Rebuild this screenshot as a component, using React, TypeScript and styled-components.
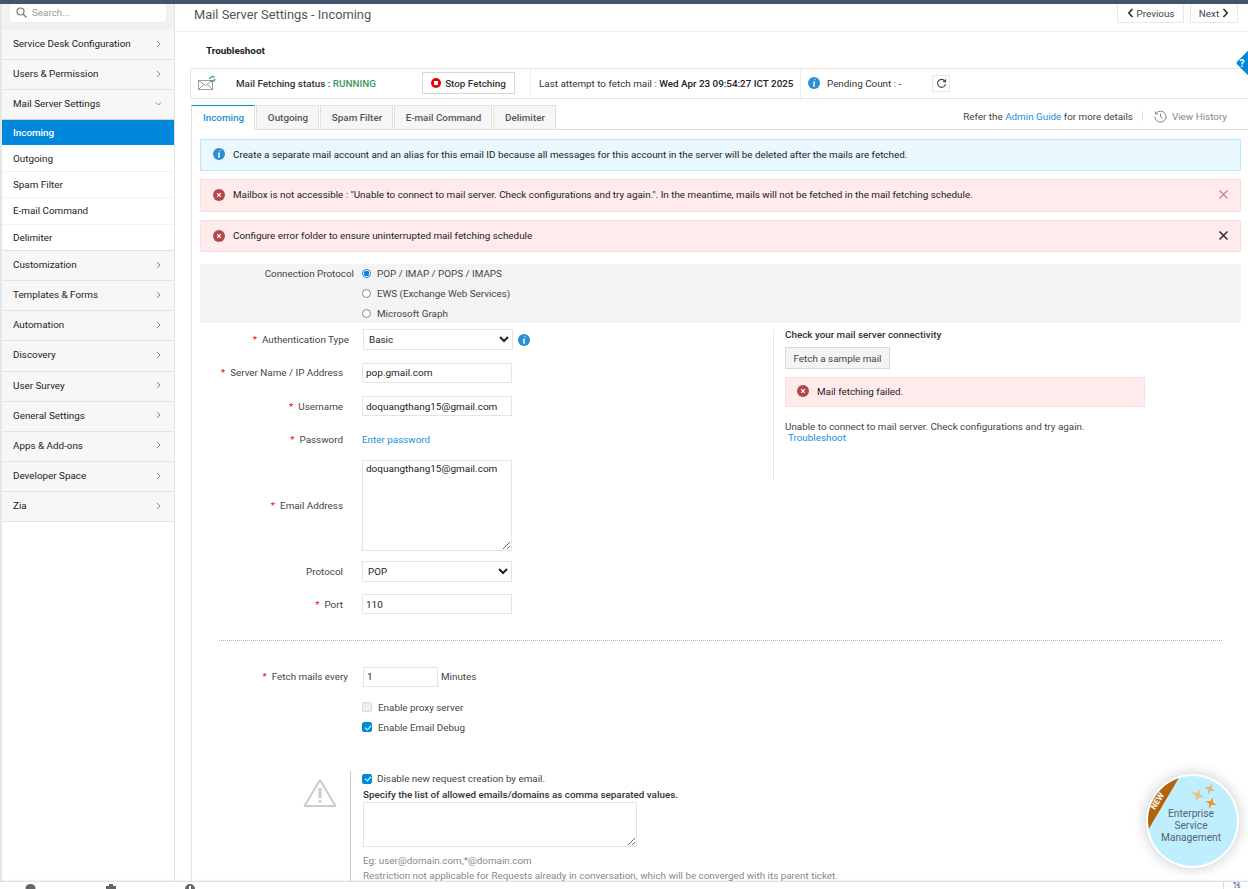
import React from "react";
import styled, { createGlobalStyle } from "styled-components";

const GlobalStyle = createGlobalStyle`
  html, body {
    margin: 0;
    padding: 0;
    height: 889px;
    overflow: hidden;
    background: #fff;
    font-family: Roboto, "Liberation Sans", sans-serif;
    font-size: 9.85px;
    color: #333;
  }
  * { box-sizing: border-box; }
`;

const Page = styled.div`
  position: relative;
  width: 1248px;
  height: 889px;
  overflow: hidden;
  display: flex;
  flex-direction: column;
`;

const TopStrip = styled.div`
  height: 4px;
  flex: none;
  background: #44546a;
`;

const Body = styled.div`
  flex: 1;
  min-height: 0;
  display: flex;
`;

const Sidebar = styled.aside`
  width: 175px;
  flex: none;
  border-left: 2px solid #e6e6e6;
  border-right: 1px solid #e3e3e3;
  background: #fff;
`;

const SearchArea = styled.div`
  height: 26px;
  padding: 0 7px;
  background: #f1f1f1;
`;

const SearchBox = styled.div`
  height: 19px;
  background: #fff;
  border: 1px solid #ececec;
  border-top: 0;
  border-radius: 0 0 3px 3px;
  display: flex;
  align-items: center;
  gap: 5px;
  padding: 0 0 2px 6px;
  color: #999;
`;

const NavHeader = styled.div<{ $strong?: boolean }>`
  height: 30.15px;
  display: flex;
  align-items: center;
  justify-content: space-between;
  padding: 0 12px 2px 11px;
  background: #f7f7f7;
  border-bottom: 1px solid ${(p) => (p.$strong ? "#cfcfcf" : "#e4e4e4")};
  color: #222;
`;

const NavItem = styled.div<{ $active?: boolean; $last?: boolean }>`
  height: ${(p) => (p.$active ? 25 : 26.4)}px;
  display: flex;
  align-items: center;
  padding-left: 11px;
  background: ${(p) => (p.$active ? "#0089dc" : "#fff")};
  color: ${(p) => (p.$active ? "#fff" : "#222")};
  font-weight: ${(p) => (p.$active ? 500 : 400)};
  border-bottom: ${(p) => (p.$active ? "0" : `1px solid ${p.$last ? "#e4e4e4" : "#f2f2f2"}`)};
`;

const Main = styled.main`
  flex: 1;
  min-width: 0;
  display: flex;
  flex-direction: column;
`;

const TitleBar = styled.div`
  height: 28px;
  flex: none;
  display: flex;
  justify-content: space-between;
  padding: 0 10px 0 19px;
  border-bottom: 1px solid #efefef;
`;

const PageTitle = styled.h1`
  margin: 0;
  font-size: 12.85px;
  font-weight: 400;
  line-height: 22px;
  color: #555;
`;

const Pager = styled.div`
  display: flex;
  gap: 6px;
  height: 19px;
`;

const PagerButton = styled.button<{ $width: number }>`
  width: ${(p) => p.$width}px;
  height: 19px;
  padding: 0;
  display: flex;
  align-items: center;
  justify-content: center;
  gap: 3px;
  background: #fff;
  border: 1px solid #e8e8e8;
  border-top: 0;
  font: inherit;
  color: #444;
`;

const SubHeading = styled.div`
  height: 36px;
  flex: none;
  padding-left: 31px;
  display: flex;
  align-items: center;
  font-weight: 700;
  color: #222;
`;

const StatusBar = styled.div`
  height: 31px;
  flex: none;
  margin-left: 15px;
  display: flex;
  align-items: center;
  border: 1px solid #e4e4e4;
  border-right: 0;
`;

const StatusCell = styled.div<{ $width: number; $pad?: number; $sep?: boolean }>`
  width: ${(p) => p.$width}px;
  flex: none;
  height: 100%;
  display: flex;
  align-items: center;
  white-space: nowrap;
  padding: 0 0 1px ${(p) => p.$pad ?? 0}px;
  border-right: ${(p) => (p.$sep ? "1px solid #ececec" : "0")};
`;

const StatusLabel = styled.span`
  font-weight: 500;
  color: #333;
`;

const Running = styled.span`
  font-weight: 500;
  color: #3a9a5b;
`;

const AttemptTime = styled.span`
  font-weight: 500;
  color: #222;
`;

const PendingText = styled.span`
  margin-left: 7px;
`;

const StopButton = styled.button`
  width: 93px;
  height: 22px;
  display: flex;
  align-items: center;
  justify-content: center;
  gap: 4px;
  background: #fff;
  border: 1px solid #d6d6d6;
  font: inherit;
  font-weight: 500;
  color: #333;
`;

const RefreshBox = styled.div`
  width: 18px;
  height: 17px;
  display: flex;
  align-items: center;
  justify-content: center;
  border: 1px solid #e6e6e6;
`;

const TabRow = styled.div`
  height: 25px;
  flex: none;
  margin: 6px 0 0 16px;
  display: flex;
  align-items: flex-end;
  border-bottom: 1px solid #dedede;
`;

const Tab = styled.div<{ $width: number; $active?: boolean }>`
  width: ${(p) => p.$width}px;
  height: 25px;
  margin-right: 1px;
  margin-bottom: -1px;
  padding-left: 1px;
  display: flex;
  align-items: center;
  justify-content: center;
  font-weight: 500;
  background: ${(p) => (p.$active ? "#fff" : "#f6f6f6")};
  color: ${(p) => (p.$active ? "#1a8fdd" : "#555")};
  border: 1px solid #e0e0e0;
  border-top: ${(p) => (p.$active ? "1px solid #0089dc" : "1px solid #e0e0e0")};
  border-bottom: ${(p) => (p.$active ? "1px solid #fff" : "1px solid #dedede")};
`;

const TabExtras = styled.div`
  margin-left: auto;
  height: 100%;
  padding: 0 21px 2px 0;
  display: flex;
  align-items: center;
  color: #444;
`;

const LinkText = styled.a`
  color: #1a8fdd;
  text-decoration: none;
`;

const Divider = styled.span`
  width: 1px;
  height: 10px;
  margin: 0 11px 0 9px;
  background: #ddd;
`;

const HistoryLink = styled.span`
  display: flex;
  align-items: center;
  gap: 5px;
  color: #888;
`;

const Content = styled.div`
  flex: 1;
  min-height: 0;
  position: relative;
  margin-left: 16px;
  padding: 9px 7px 0 8px;
  border-left: 1px solid #e3e3e3;
  overflow: hidden;
`;

const Alert = styled.div<{ $kind: "info" | "error"; $height: number; $lift?: number }>`
  height: ${(p) => p.$height}px;
  margin-bottom: 8px;
  display: flex;
  align-items: center;
  gap: 8px;
  padding: 0 11px ${(p) => p.$lift ?? 1}px 12px;
  color: #222;
  background: ${(p) => (p.$kind === "info" ? "#e9f8fe" : "#ffebec")};
  border: 1px solid ${(p) => (p.$kind === "info" ? "#bfe6f5" : "#fbdcdf")};
`;

const AlertText = styled.span`
  flex: 1;
`;

const ProtocolBlock = styled.div`
  height: 59px;
  margin-top: 12px;
  display: flex;
  background: #f4f4f4;
`;

const ProtocolLabel = styled.div`
  width: 154px;
  height: 19px;
  display: flex;
  align-items: center;
  justify-content: flex-end;
  color: #444;
`;

const ProtocolOptions = styled.div`
  margin-left: 8px;
  display: flex;
  flex-direction: column;
`;

const Choice = styled.label`
  height: 20px;
  display: flex;
  align-items: center;
  gap: 6px;
  color: #444;
`;

const Radio = styled.input.attrs({ type: "radio" })`
  appearance: none;
  width: 9px;
  height: 9px;
  margin: 0;
  border-radius: 50%;
  border: 1px solid #888;
  background: #fff;
  &:checked {
    border-color: #0089dc;
    background: radial-gradient(circle, #0089dc 0 2.5px, #fff 3px);
  }
`;

const ColumnSplit = styled.div`
  display: flex;
  justify-content: space-between;
`;

const FormColumn = styled.div`
  width: 570px;
  padding-top: 6px;
`;

const FormRow = styled.div<{ $height: number; $gap?: number }>`
  height: ${(p) => p.$height}px;
  margin-bottom: ${(p) => p.$gap ?? 0}px;
  display: flex;
  align-items: center;
`;

const FieldLabel = styled.label<{ $end?: number }>`
  width: ${(p) => p.$end ?? 143}px;
  flex: none;
  text-align: right;
  color: #444;
`;

const Star = styled.span`
  color: #f00;
  margin-right: 5px;
`;

const Field = styled.input<{ $width?: number; $left?: number }>`
  width: ${(p) => p.$width ?? 150}px;
  height: 20px;
  margin-left: ${(p) => p.$left ?? 19}px;
  padding: 0 3px;
  border: 1px solid #e4e4e4;
  font: inherit;
  font-size: 9.97px;
  color: #222;
  outline: 0;
`;

const Dropdown = styled.select<{ $width: number; $left: number }>`
  width: ${(p) => p.$width}px;
  height: 21px;
  margin-left: ${(p) => p.$left}px;
  padding: 0 1px;
  background: #fff;
  border: 1px solid #e4e4e4;
  font: inherit;
  color: #222;
  outline: 0;
`;

const AreaField = styled.textarea<{ $width: number; $height: number; $left: number }>`
  display: block;
  width: ${(p) => p.$width}px;
  height: ${(p) => p.$height}px;
  margin-left: ${(p) => p.$left}px;
  padding: 2px 3px;
  border: 1px solid #e4e4e4;
  font: inherit;
  font-size: 9.97px;
  color: #222;
  outline: 0;
`;

const EnterPassword = styled(LinkText)`
  margin-left: 19px;
`;

const HintIcon = styled.span`
  margin-left: 5px;
  line-height: 0;
`;

const ConnectivityPanel = styled.div`
  width: 468px;
  height: 151px;
  margin-top: 6px;
  padding-left: 11px;
  border-left: 1px solid #e8e8e8;
`;

const PanelTitle = styled.div`
  font-weight: 500;
  color: #333;
  line-height: 12px;
`;

const SampleButton = styled.button`
  display: block;
  width: 105px;
  height: 22px;
  margin-top: 6px;
  padding: 0;
  white-space: nowrap;
  background: #f4f4f4;
  border: 1px solid #d8d8d8;
  font: inherit;
  color: #444;
`;

const FailBox = styled.div`
  width: 360px;
  height: 30px;
  margin-top: 8px;
  display: flex;
  align-items: center;
  gap: 8px;
  padding: 0 0 2px 11px;
  background: #ffebec;
  border: 1px solid #fbdcdf;
  color: #222;
`;

const FailDetail = styled.div`
  margin-top: 14px;
  line-height: 11px;
  color: #444;
`;

const IndentLink = styled(LinkText)`
  margin-left: 3px;
`;

const DottedRule = styled.div`
  height: 1px;
  margin: 26px 19px 25px 19px;
  border-top: 1px dotted #b5b5b5;
`;

const UnitText = styled.span`
  margin-left: 3px;
  color: #444;
`;

const CheckRow = styled.label<{ $left?: number; $height?: number; $gap?: number }>`
  height: ${(p) => p.$height ?? 20}px;
  margin-left: ${(p) => p.$left ?? 162}px;
  display: flex;
  align-items: center;
  gap: ${(p) => p.$gap ?? 6}px;
  color: #444;
`;

const CheckBox = styled.input.attrs({ type: "checkbox" })`
  appearance: none;
  position: relative;
  flex: none;
  width: 10px;
  height: 10px;
  margin: 0;
  border-radius: 2px;
  border: 1px solid #d8d8d8;
  background: #eee;
  &:checked {
    border-color: #0089dc;
    background: #0089dc;
  }
  &:checked::after {
    content: "";
    position: absolute;
    left: 2.5px;
    top: 0.5px;
    width: 3px;
    height: 5px;
    border: solid #fff;
    border-width: 0 1px 1px 0;
    transform: rotate(40deg);
  }
`;

const RestrictSection = styled.div`
  margin-top: 34px;
  display: flex;
`;

const WarnColumn = styled.div`
  width: 151px;
  flex: none;
  padding: 7px 0 0 103px;
  border-right: 1px solid #ccc;
  height: 120px;
`;

const RestrictBody = styled.div`
  padding-left: 12px;
`;

const BoldNote = styled.div`
  font-weight: 500;
  color: #333;
  height: 16px;
  line-height: 18px;
`;

const Hint = styled.div<{ $top?: number }>`
  margin-top: ${(p) => p.$top ?? 0}px;
  line-height: 15px;
  color: #888;
`;

const FooterStrip = styled.div`
  height: 8px;
  flex: none;
  display: flex;
  border-top: 1px solid #e2e2e2;
  box-shadow: 0 -1px 2px rgba(0, 0, 0, 0.06);
  background: #fff;
  overflow: hidden;
  z-index: 1;
`;

const FooterIcon = styled.span<{ $left: number }>`
  margin-left: ${(p) => p.$left}px;
  padding-top: 2px;
  line-height: 0;
`;

const FooterEnd = styled.span`
  margin-left: auto;
  width: 25px;
  border-left: 1px solid #ddd;
  color: #3355aa;
  font-size: 6.5px;
  padding-left: 9px;
  line-height: 8px;
`;

const HelpTab = styled.div`
  position: absolute;
  right: -12px;
  top: 53px;
  width: 20px;
  height: 20px;
  background: #0089dc;
  transform: rotate(45deg);
  display: flex;
  align-items: center;
  justify-content: center;
  border-radius: 2px;
`;

const HelpMark = styled.span`
  transform: rotate(-45deg) translate(-8px, 0);
  color: #fff;
  font-weight: 700;
  font-size: 10px;
`;

const EsmBadge = styled.div`
  position: absolute;
  left: 1146px;
  top: 774px;
  width: 93px;
  height: 94px;
  border-radius: 50%;
  border: 2px solid #fff;
  background: #bfeeff;
  box-shadow: 0 0 14px rgba(0, 0, 0, 0.22);
  overflow: hidden;
  z-index: 2;
`;

const EsmCorner = styled.svg`
  position: absolute;
  left: 0;
  top: 0;
`;

const EsmStars = styled.svg`
  position: absolute;
  left: 38px;
  top: 4px;
`;

const EsmText = styled.div`
  position: absolute;
  left: 0;
  right: 0;
  top: 32px;
  text-align: center;
  font-size: 10.2px;
  line-height: 12px;
  color: #56666c;
  padding-right: 3px;
`;

const NewTag = styled.span`
  position: absolute;
  left: 0;
  top: 20px;
  transform: rotate(-58deg);
  color: #fff;
  font-size: 8.5px;
  font-weight: 700;
`;

const Chevron = ({ down }: { down?: boolean }) => (
  <svg width="7" height="8" viewBox="0 0 7 8" fill="none" stroke="#888" strokeWidth="1">
    {down ? <path d="M1 2.5 3.5 5 6 2.5" /> : <path d="M2 1l3 3-3 3" />}
  </svg>
);

const InfoDot = ({ size = 12 }: { size?: number }) => (
  <svg width={size} height={size} viewBox="0 0 12 12" style={{ flex: "none" }}>
    <circle cx="6" cy="6" r="6" fill="#2b8fd6" />
    <path d="M6.6 2.2h1.1l-.2 1.1H6.4zM5 4.8h2.1l-.7 3.9h.8l-.1.8H4.9l.7-3.9h-.8z" fill="#fff" />
  </svg>
);

const ErrorDot = () => (
  <svg width="12" height="12" viewBox="0 0 12 12" style={{ flex: "none" }}>
    <circle cx="6" cy="6" r="6" fill="#b04a4a" />
    <path d="M4.2 4.2l3.6 3.6M7.8 4.2 4.2 7.8" stroke="#fff" strokeWidth="1.2" />
  </svg>
);

const CloseMark = ({ color }: { color: string }) => (
  <svg width="11" height="11" viewBox="0 0 11 11" fill="none" stroke={color} strokeWidth="1.4">
    <path d="M1.5 1.5l8 8M9.5 1.5l-8 8" />
  </svg>
);

const SparkleStar = ({ x, y, r, fill }: { x: number; y: number; r: number; fill: string }) => {
  const k = r * 0.24;
  return (
    <path
      transform={`translate(${x} ${y}) rotate(20)`}
      d={`M0 ${-r}L${k} ${-k}L${r} 0L${k} ${k}L0 ${r}L${-k} ${k}L${-r} 0L${-k} ${-k}Z`}
      fill={fill}
    />
  );
};

const navTop = ["Service Desk Configuration", "Users & Permission"];
const navSub = ["Outgoing", "Spam Filter", "E-mail Command", "Delimiter"];
const navBottom = [
  "Customization",
  "Templates & Forms",
  "Automation",
  "Discovery",
  "User Survey",
  "General Settings",
  "Apps & Add-ons",
  "Developer Space",
  "Zia",
];

const tabs = [
  { name: "Incoming", width: 64, active: true },
  { name: "Outgoing", width: 63 },
  { name: "Spam Filter", width: 73 },
  { name: "E-mail Command", width: 98 },
  { name: "Delimiter", width: 63 },
];

export default function App() {
  return (
    <Page>
      <GlobalStyle />
      <TopStrip />
      <Body>
        <Sidebar>
          <SearchArea>
            <SearchBox>
              <svg width="11" height="11" viewBox="0 0 11 11" fill="none" stroke="#777" strokeWidth="1.2">
                <circle cx="4.5" cy="4.5" r="3.5" />
                <path d="M7 7l3.5 3.5" />
              </svg>
              Search...
            </SearchBox>
          </SearchArea>
          {navTop.map((name) => (
            <NavHeader key={name}>
              {name}
              <Chevron />
            </NavHeader>
          ))}
          <NavHeader $strong>
            Mail Server Settings
            <Chevron down />
          </NavHeader>
          <NavItem $active>Incoming</NavItem>
          {navSub.map((name, i) => (
            <NavItem key={name} $last={i === navSub.length - 1}>
              {name}
            </NavItem>
          ))}
          {navBottom.map((name) => (
            <NavHeader key={name}>
              {name}
              <Chevron />
            </NavHeader>
          ))}
        </Sidebar>
        <Main>
          <TitleBar>
            <PageTitle>Mail Server Settings - Incoming</PageTitle>
            <Pager>
              <PagerButton $width={67}>
                <svg width="7" height="10" viewBox="0 0 7 10" fill="none" stroke="#333" strokeWidth="1.7">
                  <path d="M5.5 1 1.8 5l3.700 4" />
                </svg>
                Previous
              </PagerButton>
              <PagerButton $width={48}>
                Next
                <svg width="7" height="10" viewBox="0 0 7 10" fill="none" stroke="#333" strokeWidth="1.7">
                  <path d="M1.5 1l3.700 4-3.700 4" />
                </svg>
              </PagerButton>
            </Pager>
          </TitleBar>
          <SubHeading>Troubleshoot</SubHeading>
          <StatusBar>
            <StatusCell $width={45} $pad={7}>
              <svg width="20" height="16" viewBox="0 0 20 16" fill="none">
                <path d="M.5 5.5h14v9H.5zM.5 5.5l7 5 7-5M.5 14.5l5-5M14.5 14.5l-5-5" stroke="#888" strokeWidth=".8" />
                <path d="M11.5 4a3 3 0 0 1 5-1.5M17 4a3 3 0 0 1-5 1.5" stroke="#3a9a5b" strokeWidth="1.2" />
              </svg>
            </StatusCell>
            <StatusCell $width={186}>
              <StatusLabel>Mail Fetching status : </StatusLabel>
              <Running>&nbsp;RUNNING</Running>
            </StatusCell>
            <StatusCell $width={109} $sep>
              <StopButton>
                <svg width="10" height="10" viewBox="0 0 10 10">
                  <circle cx="5" cy="5" r="5" fill="#e8000d" />
                  <rect x="3" y="3" width="4" height="4" fill="#fff" />
                </svg>
                Stop Fetching
              </StopButton>
            </StatusCell>
            <StatusCell $width={270} $pad={8} $sep>
              Last attempt to fetch mail :&nbsp;<AttemptTime>Wed Apr 23 09:54:27 ICT 2025</AttemptTime>
            </StatusCell>
            <StatusCell $width={131} $pad={7}>
              <InfoDot />
              <PendingText>Pending Count : -</PendingText>
            </StatusCell>
            <RefreshBox>
              <svg width="11" height="11" viewBox="0 0 11 11" fill="none" stroke="#444" strokeWidth="1.1">
                <path d="M8.8 3A4 4 0 1 0 9.5 6" />
                <path d="M9.6 1.2v2.4H7.2" />
              </svg>
            </RefreshBox>
          </StatusBar>
          <TabRow>
            {tabs.map((t) => (
              <Tab key={t.name} $width={t.width} $active={t.active}>
                {t.name}
              </Tab>
            ))}
            <TabExtras>
              Refer the&nbsp;<LinkText>Admin Guide</LinkText>&nbsp;for more details
              <Divider />
              <HistoryLink>
                <svg width="13" height="13" viewBox="0 0 13 13" fill="none" stroke="#888" strokeWidth="1">
                  <path d="M2 3.5a5.5 5.5 0 1 1-1 3" />
                  <path d="M1.5 1.5v2.5H4M6.5 3.5v3.3l2 1.4" />
                </svg>
                View History
              </HistoryLink>
            </TabExtras>
          </TabRow>
          <Content>
            <Alert $kind="info" $height={32} $lift={2}>
              <InfoDot />
              <AlertText>
                Create a separate mail account and an alias for this email ID because all messages for this account in the server will be deleted after the mails are fetched.
              </AlertText>
            </Alert>
            <Alert $kind="error" $height={33} $lift={2}>
              <ErrorDot />
              <AlertText>
                Mailbox is not accessible : "Unable to connect to mail server. Check configurations and try again.". In the meantime, mails will not be fetched in the mail fetching schedule.
              </AlertText>
              <CloseMark color="#c08a8e" />
            </Alert>
            <Alert $kind="error" $height={32}>
              <ErrorDot />
              <AlertText>Configure error folder to ensure uninterrupted mail fetching schedule</AlertText>
              <CloseMark color="#222" />
            </Alert>
            <ProtocolBlock>
              <ProtocolLabel>Connection Protocol</ProtocolLabel>
              <ProtocolOptions>
                <Choice>
                  <Radio name="proto" defaultChecked />
                  POP / IMAP / POPS / IMAPS
                </Choice>
                <Choice>
                  <Radio name="proto" />
                  EWS (Exchange Web Services)
                </Choice>
                <Choice>
                  <Radio name="proto" />
                  Microsoft Graph
                </Choice>
              </ProtocolOptions>
            </ProtocolBlock>
            <ColumnSplit>
              <FormColumn>
                <FormRow $height={21} $gap={12}>
                  <FieldLabel $end={149}>
                    <Star>*</Star>Authentication Type
                  </FieldLabel>
                  <Dropdown $width={150} $left={14} defaultValue="Basic">
                    <option>Basic</option>
                  </Dropdown>
                  <HintIcon>
                    <InfoDot />
                  </HintIcon>
                </FormRow>
                <FormRow $height={21} $gap={13}>
                  <FieldLabel>
                    <Star>*</Star>Server Name / IP Address
                  </FieldLabel>
                  <Field defaultValue="pop.gmail.com" />
                </FormRow>
                <FormRow $height={20} $gap={13}>
                  <FieldLabel>
                    <Star>*</Star>Username
                  </FieldLabel>
                  <Field defaultValue="doquangthang15@gmail.com" />
                </FormRow>
                <FormRow $height={20} $gap={11}>
                  <FieldLabel>
                    <Star>*</Star>Password
                  </FieldLabel>
                  <EnterPassword>Enter password</EnterPassword>
                </FormRow>
                <FormRow $height={91} $gap={10}>
                  <FieldLabel>
                    <Star>*</Star>Email Address
                  </FieldLabel>
                  <AreaField $width={150} $height={91} $left={19} defaultValue="doquangthang15@gmail.com" />
                </FormRow>
                <FormRow $height={21} $gap={12}>
                  <FieldLabel>Protocol</FieldLabel>
                  <Dropdown $width={150} $left={19} defaultValue="POP">
                    <option>POP</option>
                  </Dropdown>
                </FormRow>
                <FormRow $height={20}>
                  <FieldLabel>
                    <Star>*</Star>Port
                  </FieldLabel>
                  <Field defaultValue="110" />
                </FormRow>
              </FormColumn>
              <ConnectivityPanel>
                <PanelTitle>Check your mail server connectivity</PanelTitle>
                <SampleButton>Fetch a sample mail</SampleButton>
                <FailBox>
                  <ErrorDot />
                  Mail fetching failed.
                </FailBox>
                <FailDetail>
                  Unable to connect to mail server. Check configurations and try again.
                  <br />
                  <IndentLink>Troubleshoot</IndentLink>
                </FailDetail>
              </ConnectivityPanel>
            </ColumnSplit>
            <DottedRule />
            <FormRow $height={21} $gap={10}>
              <FieldLabel $end={148}>
                <Star>*</Star>Fetch mails every
              </FieldLabel>
              <Field $width={75} $left={15} defaultValue="1" />
              <UnitText>Minutes</UnitText>
            </FormRow>
            <CheckRow>
              <CheckBox disabled />
              Enable proxy server
            </CheckRow>
            <CheckRow>
              <CheckBox defaultChecked />
              Enable Email Debug
            </CheckRow>
            <RestrictSection>
              <WarnColumn>
                <svg width="34" height="30" viewBox="0 0 34 30" fill="none">
                  <path d="M17 2 32.5 28H1.500z" stroke="#ccc" strokeWidth="2" strokeLinejoin="round" />
                  <path d="M17 10v10" stroke="#ccc" strokeWidth="3" />
                  <circle cx="17" cy="23.5" r="1.6" fill="#ccc" />
                </svg>
              </WarnColumn>
              <RestrictBody>
                <CheckRow $left={-1} $height={15} $gap={5}>
                  <CheckBox defaultChecked />
                  Disable new request creation by email.
                </CheckRow>
                <BoldNote>Specify the list of allowed emails/domains as comma separated values.</BoldNote>
                <AreaField $width={274} $height={45} $left={0} />
                <Hint $top={6}>Eg: user@domain.com,*@domain.com</Hint>
                <Hint>Restriction not applicable for Requests already in conversation, which will be converged with its parent ticket.</Hint>
              </RestrictBody>
            </RestrictSection>
          </Content>
        </Main>
      </Body>
      <FooterStrip>
        <FooterIcon $left={25}>
          <svg width="11" height="8" viewBox="0 0 11 8">
            <ellipse cx="5.5" cy="4" rx="5" ry="4" fill="#666" />
          </svg>
        </FooterIcon>
        <FooterIcon $left={70}>
          <svg width="10" height="8" viewBox="0 0 10 8">
            <rect y="2" width="10" height="6" fill="#666" />
            <rect x="3" width="4" height="3" fill="#666" />
          </svg>
        </FooterIcon>
        <FooterIcon $left={69}>
          <svg width="10" height="8" viewBox="0 0 10 8">
            <circle cx="5" cy="5" r="5" fill="#666" />
            <rect x="4" y="2" width="2" height="6" fill="#fff" />
          </svg>
        </FooterIcon>
        <FooterEnd>ใช้</FooterEnd>
      </FooterStrip>
      <HelpTab>
        <HelpMark>?</HelpMark>
      </HelpTab>
      <EsmBadge>
        <EsmCorner width="40" height="60" viewBox="0 0 40 60">
          <path d="M32 0-1 56V0z" fill="#b5630a" />
        </EsmCorner>
        <NewTag>NEW</NewTag>
        <EsmStars width="36" height="32" viewBox="0 0 36 32">
          <SparkleStar x={12} y={15} r={7} fill="#e2c48a" />
          <SparkleStar x={24} y={9} r={6} fill="#dcbb7c" />
          <SparkleStar x={25} y={23} r={6} fill="#ee9420" />
        </EsmStars>
        <EsmText>
          Enterprise
          <br />
          Service
          <br />
          Management
        </EsmText>
      </EsmBadge>
    </Page>
  );
}
